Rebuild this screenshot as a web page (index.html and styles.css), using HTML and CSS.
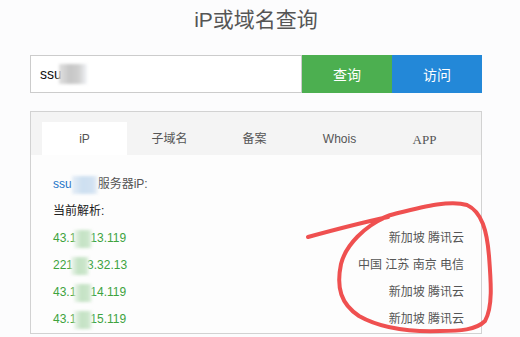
FILE: index.html
```html
<!DOCTYPE html>
<html lang="zh-CN">

<head>
    <meta charset="UTF-8">
    <meta name="viewport" content="width=device-width, initial-scale=1.0">
    <title>iP或域名查询</title>
    <link rel="stylesheet" href="styles.css">
</head>

<body>
    <div class="wrap">
        <h1 class="title">iP或域名查询</h1>

        <!-- 搜索栏 -->
        <form class="search">
            <div class="search-input">ssu<span class="blur blur-gray"></span></div>
            <button type="button" class="btn btn-query">查询</button>
            <button type="button" class="btn btn-visit">访问</button>
        </form>

        <!-- 结果面板 -->
        <div class="panel">
            <div class="tabs">
                <div class="tab active">iP</div>
                <div class="tab">子域名</div>
                <div class="tab">备案</div>
                <div class="tab">Whois</div>
                <div class="tab tab-serif">APP</div>
            </div>
            <div class="panel-body">
                <div class="line"><span class="domain">ssu<span class="blur blur-blue"></span></span>服务器iP:</div>
                <div class="line label">当前解析:</div>
                <div class="row"><span class="ip">43.1<span class="blur blur-green"></span>13.119</span><span class="loc">新加坡 腾讯云</span></div>
                <div class="row"><span class="ip">221<span class="blur blur-green"></span>3.32.13</span><span class="loc">中国 江苏 南京 电信</span></div>
                <div class="row"><span class="ip">43.1<span class="blur blur-green"></span>14.119</span><span class="loc">新加坡 腾讯云</span></div>
                <div class="row"><span class="ip">43.1<span class="blur blur-green"></span>15.119</span><span class="loc">新加坡 腾讯云</span></div>
            </div>
        </div>
    </div>

    <!-- 手绘圈注 -->
    <svg class="mark" width="520" height="337" viewBox="0 0 520 337">
        <path d="M308,237 C330,231 360,223 388,217 M384,218 C366,226 346,244 341,264 C336,288 341,304 359,316 C380,328 410,332 440,331 C460,331 476,330 485,321 C493,307 491,282 489,256 C487,231 482,212 467,205 C451,200 426,206 398,213 C391,215 386,216 383,218"
              fill="none" stroke="#ef5050" stroke-width="4" stroke-linecap="round" stroke-linejoin="round"/>
    </svg>
</body>

</html>
```

FILE: styles.css
```css
body {
    font-family: "Liberation Sans", "Noto Sans CJK SC", sans-serif;
    background-color: #fcfcfd;
    margin: 0;
    position: relative;
    height: 337px;
    overflow: hidden;
}

.wrap {
    width: 452px;
    margin-left: 30px;
}

.title {
    margin: 0;
    height: 41px;
    line-height: 40px;
    text-align: center;
    font-size: 21px;
    font-weight: normal;
    color: #555;
}

.search {
    display: flex;
    height: 38px;
    margin: 14px 0 18px;
}

.search-input {
    flex: 1;
    display: flex;
    align-items: center;
    padding-left: 9px;
    border: 1px solid #ccc;
    background-color: #fff;
    font-size: 14px;
    color: #111;
}

.btn {
    width: 90px;
    border: none;
    color: #fff;
    font-size: 14px;
    font-family: inherit;
    cursor: pointer;
}

.btn-query {
    background-color: #4caf50;
}

.btn-visit {
    background-color: #2388d8;
}

.blur {
    display: inline-block;
    vertical-align: middle;
    filter: blur(1.5px);
}

.blur-gray {
    width: 28px;
    height: 20px;
    margin-left: -3px;
    background: linear-gradient(90deg, #e0e0e0, #c6c6c6 40%, #cfcfcf 70%, #f2f4f8);
}

.blur-blue {
    width: 26px;
    height: 18px;
    background: linear-gradient(90deg, #e6eef7, #cddff0 40%, #d2e2f2 80%, #f0f4f8);
}

.blur-green {
    width: 18px;
    height: 18px;
    margin: 0 -2px;
    background: linear-gradient(90deg, #eef6ee, #c4e2c4 40%, #cbe6cb 80%, #eef6ee);
}

.panel {
    border: 1px solid #d2d2d2;
    background-color: #fdfdfd;
}

.tabs {
    display: flex;
    background-color: #f4f4f4;
    padding: 10px 0 0 11px;
}

.tab {
    width: 85px;
    height: 33px;
    line-height: 35px;
    text-align: center;
    font-size: 12px;
    color: #555;
}

.tab.active {
    background-color: #fff;
}

.tab-serif {
    font-family: "Liberation Serif", serif;
    font-size: 13px;
}

.panel-body {
    padding: 16px 17px 0 22px;
    font-size: 12px;
}

.line,
.row {
    height: 27px;
    line-height: 27px;
}

.line {
    color: #555;
}

.domain {
    color: #1a73c8;
}

.label {
    color: #222;
}

.row {
    display: flex;
    justify-content: space-between;
}

.ip {
    color: #3ea33e;
}

.loc {
    color: #555;
}

.mark {
    position: absolute;
    top: 0;
    left: 0;
    pointer-events: none;
}
```
